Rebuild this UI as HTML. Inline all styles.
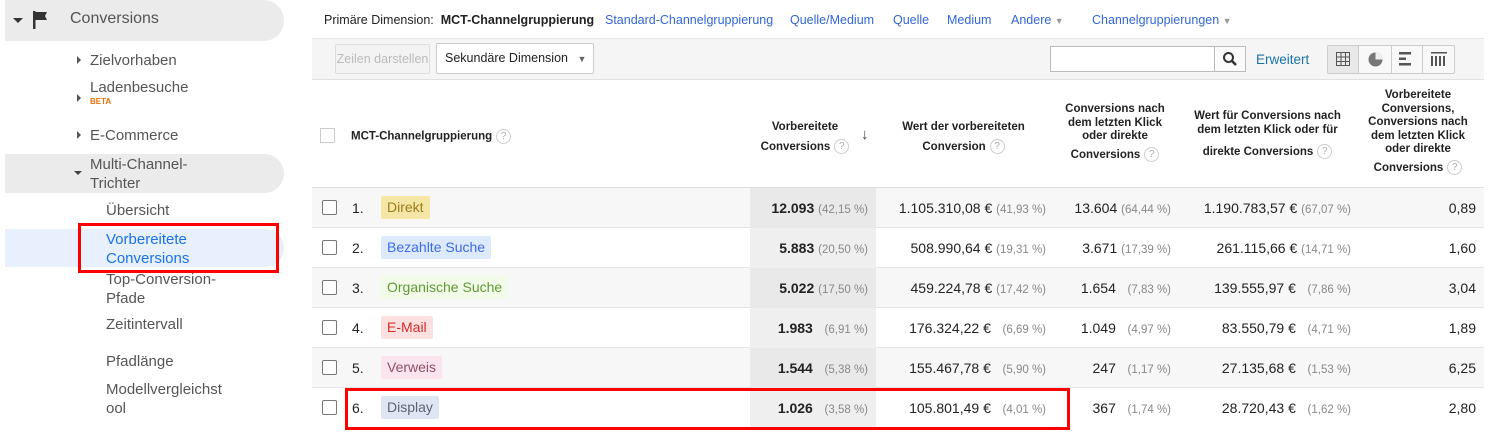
<!DOCTYPE html>
<html><head><meta charset="utf-8"><style>
*{box-sizing:border-box;margin:0;padding:0}
body{width:1494px;height:438px;background:#fff;font-family:"Liberation Sans",sans-serif;color:#222;position:relative;overflow:hidden}
.a{position:absolute;white-space:nowrap}
.side{font-size:15px;color:#555}
.pill{position:absolute;background:#ebebeb;border-radius:0 22px 22px 0}
.tri{position:absolute;width:0;height:0}
.lnk{color:#3367d6;font-size:12.5px}
.hd{font-size:11.5px;font-weight:bold;text-align:center;line-height:13.5px;color:#222}
.q{display:inline-block;width:15px;height:15px;border:1px solid #ccc;border-radius:50%;font-size:10px;color:#aaa;text-align:center;line-height:13px;font-weight:normal;margin-left:4px;vertical-align:middle}
.row{position:absolute;left:312px;width:1172px;height:40px;border-bottom:1px solid #e4e4e4}
.cb{position:absolute;left:10px;top:12px;width:15px;height:15px;border:1.5px solid #777;border-radius:2px;background:#fff}
.rk{position:absolute;left:40px;top:12px;font-size:14px}
.tag{position:absolute;left:69px;top:8px;height:23px;padding:0 6px;font-size:14px;line-height:23px;border-radius:2px}
.c{position:absolute;top:12px;font-size:14px;text-align:right}
.p{color:#888;font-size:11.5px}
</style></head><body>
<!-- sidebar -->
<div class="pill" style="left:5px;top:0;width:279px;height:41px"></div>
<div class="tri" style="left:13px;top:18px;border-left:5px solid transparent;border-right:5px solid transparent;border-top:5px solid #333"></div>
<svg class="a" style="left:32px;top:10px" width="18" height="20"><rect x="1" y="1" width="2.5" height="18" fill="#333"/><path d="M3 2h12l-2 4 2 4H3z" fill="#333"/></svg>
<div class="a side" style="left:70px;top:10px;font-size:16px">Conversions</div>
<div class="tri" style="left:77px;top:56px;border-top:4px solid transparent;border-bottom:4px solid transparent;border-left:4px solid #555"></div>
<div class="a side" style="left:90px;top:52px">Zielvorhaben</div>
<div class="tri" style="left:77px;top:94px;border-top:4px solid transparent;border-bottom:4px solid transparent;border-left:4px solid #555"></div>
<div class="a side" style="left:90px;top:79px">Ladenbesuche</div>
<div class="a" style="left:90px;top:97px;font-size:8px;font-weight:bold;color:#e8710a">BETA</div>
<div class="tri" style="left:77px;top:131px;border-top:4px solid transparent;border-bottom:4px solid transparent;border-left:4px solid #555"></div>
<div class="a side" style="left:90px;top:127px">E-Commerce</div>
<div class="pill" style="left:5px;top:154px;width:279px;height:39px"></div>
<div class="tri" style="left:74px;top:171px;border-left:4px solid transparent;border-right:4px solid transparent;border-top:4px solid #444"></div>
<div class="a side" style="left:90px;top:155px;line-height:19px">Multi-Channel-<br>Trichter</div>
<div class="a side" style="left:106px;top:202px">Übersicht</div>
<div class="pill" style="left:5px;top:229px;width:279px;height:38px;background:#e8f0fe"></div>
<div class="a side" style="left:106px;top:230px;line-height:19px;color:#1a73e8">Vorbereitete<br>Conversions</div>
<div class="a" style="left:78px;top:223px;width:201px;height:50px;border:3px solid #f00"></div>
<div class="a side" style="left:106px;top:270px;line-height:19px">Top-Conversion-<br>Pfade</div>
<div class="a side" style="left:106px;top:316px">Zeitintervall</div>
<div class="a side" style="left:106px;top:353px">Pfadlänge</div>
<div class="a side" style="left:106px;top:380px;line-height:19px">Modellvergleichst<br>ool</div>

<!-- top bar -->
<div class="a" style="left:324px;top:13px;font-size:12.5px">Primäre Dimension:&nbsp; <b>MCT-Channelgruppierung</b></div>
<div class="a lnk" style="left:605px;top:13px">Standard-Channelgruppierung</div>
<div class="a lnk" style="left:790px;top:13px">Quelle/Medium</div>
<div class="a lnk" style="left:893px;top:13px">Quelle</div>
<div class="a lnk" style="left:947px;top:13px">Medium</div>
<div class="a lnk" style="left:1011px;top:13px">Andere <span style="color:#999;font-size:9px">▼</span></div>
<div class="a lnk" style="left:1092px;top:13px">Channelgruppierungen <span style="color:#999;font-size:9px">▼</span></div>
<!-- toolbar -->
<div class="a" style="left:312px;top:38px;width:1172px;height:42px;background:#f5f5f5;border-top:1px solid #e6e6e6;border-bottom:1px solid #e0e0e0"></div>
<div class="a" style="left:335px;top:44px;width:95px;height:30px;border:1px solid #ddd;border-radius:2px;font-size:12.5px;color:#bbb;line-height:28px;text-align:center;background:#f3f3f3">Zeilen darstellen</div>
<div class="a" style="left:436px;top:43px;width:158px;height:31px;border:1px solid #ccc;border-radius:2px;font-size:12.5px;line-height:29px;padding-left:8px;background:#fff">Sekundäre Dimension <span style="color:#666;font-size:9px;margin-left:6px">▼</span></div>
<div class="a" style="left:1050px;top:46px;width:196px;height:26px;border:1px solid #bbb;background:#fff"></div>
<div class="a" style="left:1214px;top:46px;width:32px;height:26px;border:1px solid #bbb;background:#fafafa"></div>
<svg class="a" style="left:1222px;top:51px" width="16" height="16"><circle cx="6.5" cy="6.5" r="4.5" stroke="#333" stroke-width="2" fill="none"/><path d="M10 10l4 4" stroke="#333" stroke-width="2.6"/></svg>
<div class="a" style="left:1256px;top:52px;font-size:13.5px;color:#1a73a8">Erweitert</div>
<div class="a" style="left:1327px;top:45px;width:128px;height:29px;border:1px solid #ccc;background:#f8f8f8;border-radius:2px"></div>
<div class="a" style="left:1328px;top:46px;width:31px;height:27px;background:#e8e8e8;border-right:1px solid #ccc"></div>
<div class="a" style="left:1391px;top:46px;width:1px;height:27px;background:#ccc"></div>
<div class="a" style="left:1422px;top:46px;width:1px;height:27px;background:#ccc"></div>
<svg class="a" style="left:1336px;top:52px" width="14" height="14"><path d="M.5 .5h13v13H.5zM.5 5h13M.5 9.5h13M5 .5v13M9.5 .5v13" stroke="#555" fill="none"/></svg>
<svg class="a" style="left:1368px;top:52px" width="15" height="15"><circle cx="7.5" cy="7.5" r="7" fill="#777"/><path d="M7.5 7.5V.5A7 7 0 0 1 14.5 7.5z" fill="#eee"/></svg>
<svg class="a" style="left:1399px;top:52px" width="14" height="14"><rect y="0" width="12" height="2.5" fill="#555"/><rect y="5.5" width="7" height="2.5" fill="#555"/><rect y="11" width="12" height="2.5" fill="#555"/></svg>
<svg class="a" style="left:1431px;top:52px" width="16" height="14"><g fill="#555"><rect x="0" y="0" width="16" height="1.5"/><rect x="0" y="4" width="2" height="10"/><rect x="4" y="4" width="2" height="10"/><rect x="8" y="4" width="2" height="10"/><rect x="12" y="4" width="2" height="10"/></g></svg>

<!-- header -->
<div class="a" style="left:750px;top:80px;width:126px;height:108px"></div>
<div class="a" style="left:320px;top:128px;width:15px;height:15px;border:1px solid #ccc"></div>
<div class="a hd" style="left:351px;top:129px">MCT-Channelgruppierung<span class="q">?</span></div>
<div class="a hd" style="left:750px;top:117px;width:110px;line-height:20px">Vorbereitete<br>Conversions<span class="q">?</span></div>
<div class="a" style="left:861px;top:126px;font-size:15px;color:#444">↓</div>
<div class="a hd" style="left:886px;top:117px;width:155px;line-height:20px">Wert der vorbereiteten<br>Conversion<span class="q">?</span></div>
<div class="a hd" style="left:1056px;top:103px;width:118px">Conversions nach<br>dem letzten Klick<br>oder direkte<br><span style="line-height:22px">Conversions<span class="q">?</span></span></div>
<div class="a hd" style="left:1185px;top:110px;width:165px">Wert für Conversions nach<br>dem letzten Klick oder für<br><span style="line-height:30px">direkte Conversions<span class="q">?</span></span></div>
<div class="a hd" style="left:1362px;top:89px;width:112px">Vorbereitete<br>Conversions,<br>Conversions nach<br>dem letzten Klick<br>oder direkte<br><span style="line-height:22px">Conversions<span class="q">?</span></span></div>
<div class="a" style="left:312px;top:187px;width:1172px;height:1px;background:#ddd"></div>

<!-- rows -->
<div class="row" style="top:188px;background:#f7f7f7"><div class="a" style="left:438px;top:0;width:126px;height:40px;background:#e9e9e9"></div><div class="cb"></div><div class="rk">1.</div><div class="tag" style="background:#f6e6a6;color:#9a7d1a">Direkt</div>
<div class="c" style="right:616px"><b>12.093</b> <span class="p">(42,15 %)</span></div><div class="c" style="right:438px">1.105.310,08 € <span class="p">(41,93 %)</span></div><div class="c" style="right:313px">13.604 <span class="p">(64,44 %)</span></div><div class="c" style="right:133px">1.190.783,57 € <span class="p">(67,07 %)</span></div><div class="c" style="right:8px">0,89</div></div>
<div class="row" style="top:228px;background:#fff"><div class="a" style="left:438px;top:0;width:126px;height:40px;background:#efefef"></div><div class="cb"></div><div class="rk">2.</div><div class="tag" style="background:#dde9fd;color:#3d6be6">Bezahlte Suche</div>
<div class="c" style="right:616px"><b>5.883</b> <span class="p">(20,50 %)</span></div><div class="c" style="right:438px">508.990,64 € <span class="p">(19,31 %)</span></div><div class="c" style="right:313px">3.671 <span class="p">(17,39 %)</span></div><div class="c" style="right:133px">261.115,66 € <span class="p">(14,71 %)</span></div><div class="c" style="right:8px">1,60</div></div>
<div class="row" style="top:268px;background:#f7f7f7"><div class="a" style="left:438px;top:0;width:126px;height:40px;background:#e9e9e9"></div><div class="cb"></div><div class="rk">3.</div><div class="tag" style="background:#f1fbe8;color:#5f9a36">Organische Suche</div>
<div class="c" style="right:616px"><b>5.022</b> <span class="p">(17,50 %)</span></div><div class="c" style="right:438px">459.224,78 € <span class="p">(17,42 %)</span></div><div class="c" style="right:313px">1.654 &nbsp; <span class="p">(7,83 %)</span></div><div class="c" style="right:133px">139.555,97 € &nbsp; <span class="p">(7,86 %)</span></div><div class="c" style="right:8px">3,04</div></div>
<div class="row" style="top:308px;background:#fff"><div class="a" style="left:438px;top:0;width:126px;height:40px;background:#efefef"></div><div class="cb"></div><div class="rk">4.</div><div class="tag" style="background:#fde0e0;color:#d52b2b">E-Mail</div>
<div class="c" style="right:616px"><b>1.983</b> &nbsp; <span class="p">(6,91 %)</span></div><div class="c" style="right:438px">176.324,22 € &nbsp; <span class="p">(6,69 %)</span></div><div class="c" style="right:313px">1.049 &nbsp; <span class="p">(4,97 %)</span></div><div class="c" style="right:133px">83.550,79 € &nbsp; <span class="p">(4,71 %)</span></div><div class="c" style="right:8px">1,89</div></div>
<div class="row" style="top:348px;background:#f7f7f7"><div class="a" style="left:438px;top:0;width:126px;height:40px;background:#e9e9e9"></div><div class="cb"></div><div class="rk">5.</div><div class="tag" style="background:#fbe4ee;color:#8f4f68">Verweis</div>
<div class="c" style="right:616px"><b>1.544</b> &nbsp; <span class="p">(5,38 %)</span></div><div class="c" style="right:438px">155.467,78 € &nbsp; <span class="p">(5,90 %)</span></div><div class="c" style="right:313px">247 &nbsp; <span class="p">(1,17 %)</span></div><div class="c" style="right:133px">27.135,68 € &nbsp; <span class="p">(1,53 %)</span></div><div class="c" style="right:8px">6,25</div></div>
<div class="row" style="top:388px;background:#fff;border-bottom:none"><div class="a" style="left:438px;top:0;width:126px;height:40px;background:#efefef"></div><div class="cb"></div><div class="rk">6.</div><div class="tag" style="background:#dfe5f2;color:#5a6475">Display</div>
<div class="c" style="right:616px"><b>1.026</b> &nbsp; <span class="p">(3,58 %)</span></div><div class="c" style="right:438px">105.801,49 € &nbsp; <span class="p">(4,01 %)</span></div><div class="c" style="right:313px">367 &nbsp; <span class="p">(1,74 %)</span></div><div class="c" style="right:133px">28.720,43 € &nbsp; <span class="p">(1,62 %)</span></div><div class="c" style="right:8px">2,80</div></div>
<div class="a" style="left:345px;top:388px;width:725px;height:42px;border:3px solid #f00"></div>
</body></html>
